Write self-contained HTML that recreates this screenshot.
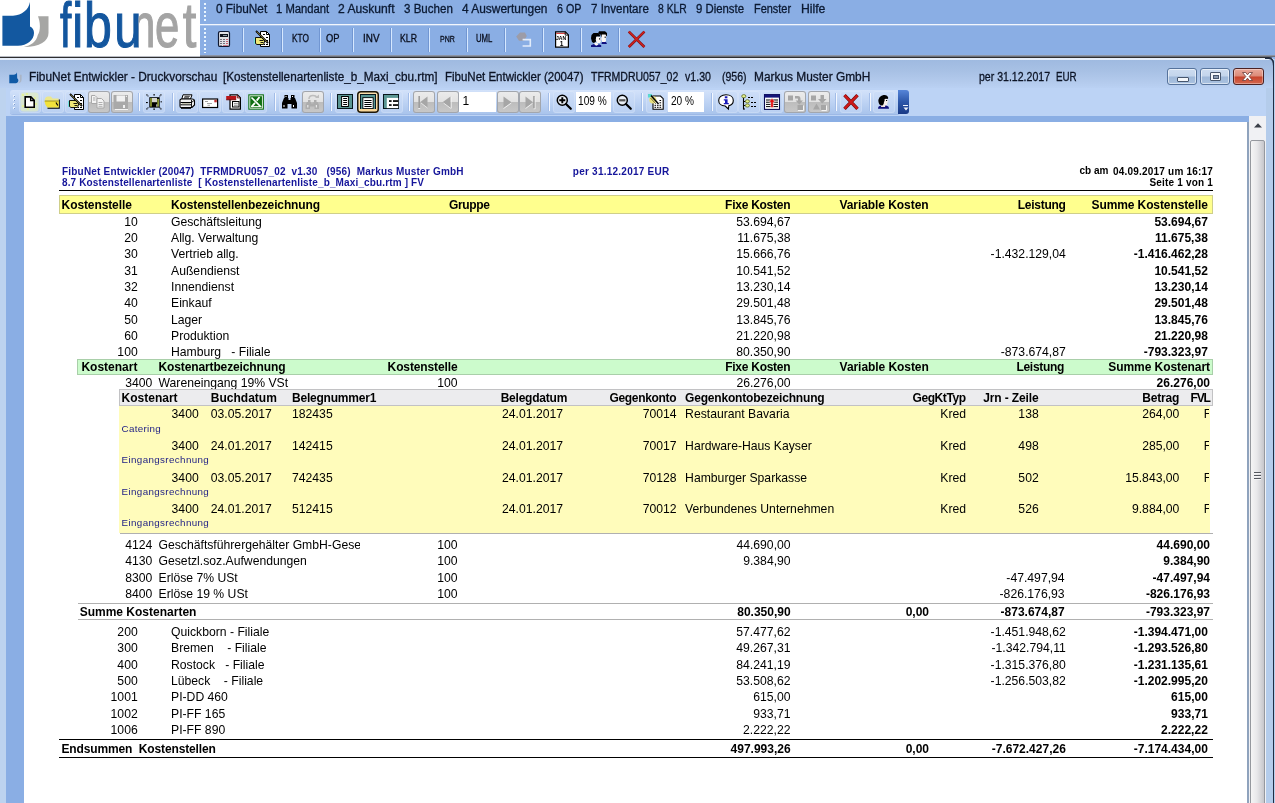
<!DOCTYPE html>
<html lang="de">
<head>
<meta charset="utf-8">
<title>FibuNet Entwickler - Druckvorschau</title>
<style>
html,body{margin:0;padding:0}
body{width:1275px;height:803px;overflow:hidden;position:relative;background:#8aaee4;font-family:"Liberation Sans",sans-serif;font-size:12.2px;color:#000}
.t{position:absolute;white-space:pre;line-height:16px;font-size:12.2px}
.b{font-weight:bold}
.ui{position:absolute;transform-origin:0 0;display:inline-block;-webkit-text-stroke:0.3px currentColor;white-space:pre;font-size:12px;line-height:16px;color:#0b1a33}
.abs{position:absolute}
#logo{position:absolute;left:0;top:0;width:200px;height:57px;background:#fff}
#menubar{position:absolute;left:200px;top:0;width:1075px;height:24px;background:#8aaee4}
#tb1{position:absolute;left:200px;top:26px;width:1075px;height:30px;background:#8aaee4}
.sep1{position:absolute;top:28px;width:1px;height:24px;background:#7196d2;border-right:1.3px solid #d6e8ff}
#win{position:absolute;left:0;top:59px;width:1275px;height:744px}
#page{position:absolute;left:24px;top:122px;width:1223px;height:681px;background:#fff}
.btn2{position:absolute;top:91px;width:22px;height:22px;border-radius:3px;background:linear-gradient(#cddef8,#bad0f2);box-shadow:inset 0 0 0 1px rgba(255,255,255,.18)}
.dis{background:linear-gradient(#ececec 0,#e2e2e2 48%,#bdbdbd 52%,#c8c8c8 100%);box-shadow:inset 0 0 0 1px #a2a6ad}
.sep2{position:absolute;top:93px;width:1px;height:18px;background:#a3bde8;border-right:1px solid #f4f8ff}
.wb{position:absolute;top:68px;width:30px;height:17px;box-sizing:border-box;border:1px solid #56739c;border-radius:3px;background:linear-gradient(#cddcf0 0,#c3d5ec 48%,#9fb8d9 52%,#aac2e0 100%);box-shadow:inset 0 0 0 1px rgba(255,255,255,.55)}
.wc{width:31px;border-color:#4b2223;background:linear-gradient(#e9a899 0,#dc8a78 48%,#c8432b 52%,#d3674f 100%);box-shadow:inset 0 0 0 1px rgba(255,255,255,.35)}
#txt{position:absolute;left:0;top:0;width:1275px;height:803px;will-change:transform}
</style>
</head>
<body>

<!-- top application bar -->
<div id="logo">
<svg width="200" height="57" viewBox="0 0 200 57" style="position:absolute;left:0;top:0;will-change:transform">
<path d="M2.4 15.7 L13 15.7 C22 15.2 28.5 10 30 2.1 L30 26.5 C32.5 27.5 34 30 34 33 C34 40 27 45.7 18 45.7 L2.4 45.7 Z" fill="#1358a0"/>
<path d="M38 16.2 L48.5 16.2 L48.5 33 C48.5 41 40 47 23.7 47 C31 45.5 36.5 41.5 37.8 35 C39.2 33 39.9 30 39.9 26 C39.9 22 39 19 38 16.2 Z" fill="#a6a6a4"/>
<defs><clipPath id="cn"><rect x="138.6" y="0" width="62" height="57"/></clipPath></defs><g font-family="Liberation Sans, sans-serif" font-size="60" transform="translate(0,46.6) scale(1,1.035) translate(0,-46.6)"><text y="46.6" fill="#13569e" stroke="#13569e" stroke-width="1.1"><tspan x="60.07" textLength="11.32" lengthAdjust="spacingAndGlyphs">f</tspan><tspan x="72.18" textLength="10.87" lengthAdjust="spacingAndGlyphs">i</tspan><tspan x="83.93" textLength="27.83" lengthAdjust="spacingAndGlyphs">b</tspan><tspan x="114.35" textLength="27.36" lengthAdjust="spacingAndGlyphs">u</tspan></text><text y="46.6" fill="#a4a4a4" stroke="#a4a4a4" stroke-width="1.1" clip-path="url(#cn)"><tspan x="131.40" textLength="23.83" lengthAdjust="spacingAndGlyphs">n</tspan><tspan x="154.99" textLength="24.30" lengthAdjust="spacingAndGlyphs">e</tspan><tspan x="182.81" textLength="13.60" lengthAdjust="spacingAndGlyphs">t</tspan></text></g>
</svg>
</div>
<div id="menubar"></div>
<div class="abs" style="left:200px;top:24px;width:1075px;height:1px;background:#f2f6fd"></div>
<div class="abs" style="left:200px;top:25px;width:1075px;height:1px;background:#a9c3ea"></div>
<div id="tb1"></div>
<div class="abs" style="left:204px;top:28px;width:2px;height:25px;background:repeating-linear-gradient(#eaf6ff 0,#eaf6ff 2px,transparent 2px,transparent 4px)"></div>
<div class="abs" style="left:204px;top:3px;width:2px;height:19px;background:repeating-linear-gradient(#eaf6ff 0,#eaf6ff 2px,transparent 2px,transparent 4px)"></div>
<div class="abs" style="left:0;top:56px;width:200px;height:1px;background:#b8bbc2"></div>
<div class="abs" style="left:200px;top:54.5px;width:1075px;height:2.5px;background:linear-gradient(#9ba6ba,#5c5e64)"></div>
<div class="abs" style="left:0;top:57px;width:1275px;height:1.4px;background:#2e2e30"></div>
<div class="abs" style="left:0;top:58.4px;width:1275px;height:1.6px;background:#e6eefa"></div>
<!-- child window -->
<div class="abs" style="left:0;top:60px;width:1275px;height:28px;background:linear-gradient(#9fbae0 0,#a8c1e5 40%,#b4cbed 80%,#bad1f3 100%)"></div>
<div class="abs" style="left:0;top:88px;width:1275px;height:28px;background:#bcd3f5"></div>
<div class="abs" style="left:0;top:116px;width:1275px;height:687px;background:#8aaee4"></div>
<div class="abs" style="left:0;top:88px;width:6px;height:715px;background:#bdd3ef"></div>
<div class="abs" style="left:1266px;top:88px;width:7px;height:715px;background:#b4cceb"></div>
<div class="abs" style="left:1273px;top:65px;width:1.4px;height:741px;background:#1f2d44"></div>
<svg class="abs" style="left:1265px;top:57px" width="10" height="10" viewBox="0 0 10 10"><path d="M0 1.2 H3.5 Q8.7 1.2 8.7 8.5" fill="none" stroke="#1f2d44" stroke-width="1.6"/><path d="M4 0 H10 V8 Q10 0 4 0 Z" fill="#8aaee4"/></svg>
<div class="abs" style="left:1274.4px;top:59px;width:1px;height:744px;background:#b9d0ee"></div>
<div id="page"></div>
<div class="abs" style="left:1247px;top:122px;width:2px;height:681px;background:#8fa3bd"></div>
<!-- scrollbar -->
<div class="abs" style="left:1249px;top:116px;width:17px;height:687px;background:#f0f1f4"></div>
<div class="abs" style="left:1250px;top:140px;width:15px;height:670px;border:1px solid #95989e;border-radius:2px;box-sizing:border-box;background:linear-gradient(90deg,#f5f5f5,#e8e8ea 45%,#c6c6cb)"></div>
<svg class="abs" style="left:1253px;top:121px" width="10" height="8" viewBox="0 0 10 8"><path d="M1 6.5 L5 2.2 L9 6.5 Z" fill="#3a3f48"/></svg>
<div class="abs" style="left:1254px;top:472px;width:7px;height:1px;background:#55585f;box-shadow:0 1px 0 #f4f4f6"></div>
<div class="abs" style="left:1254px;top:475px;width:7px;height:1px;background:#55585f;box-shadow:0 1px 0 #f4f4f6"></div>
<div class="abs" style="left:1254px;top:478px;width:7px;height:1px;background:#55585f;box-shadow:0 1px 0 #f4f4f6"></div>
<!-- window buttons -->
<div class="wb" style="left:1167px"><div style="position:absolute;left:9px;top:7.5px;width:10px;height:3px;background:#f4f7fb;border:1px solid #47566d;border-radius:1px;box-sizing:content-box"></div></div>
<div class="wb" style="left:1200px"><div style="position:absolute;left:9px;top:3px;width:9px;height:7px;background:#f4f7fb;border:1px solid #47566d;border-radius:1px"></div><div style="position:absolute;left:12px;top:6px;width:4px;height:1.5px;background:#8b9bb3;border:1px solid #47566d"></div></div>
<div class="wb wc" style="left:1233px"><svg width="31" height="17" viewBox="0 0 31 17" style="position:absolute;left:-2px;top:-1.5px"><path d="M10.5 4.5 L13.7 4.5 L15.5 6.8 L17.3 4.5 L20.5 4.5 L17.2 8.5 L20.5 12.5 L17.3 12.5 L15.5 10.2 L13.7 12.5 L10.5 12.5 L13.8 8.5 Z" fill="#fff" stroke="#6a3a36" stroke-width="0.8"/></svg></div>

<div id="txt">
<span class="ui" style="transform:scaleX(0.9842);left:215.90px;top:1.00px">0 FibuNet</span>
<span class="ui" style="transform:scaleX(0.9382);left:275.60px;top:1.00px">1 Mandant</span>
<span class="ui" style="transform:scaleX(1.0083);left:338.00px;top:1.00px">2 Auskunft</span>
<span class="ui" style="transform:scaleX(0.9625);left:403.50px;top:1.00px">3 Buchen</span>
<span class="ui" style="transform:scaleX(0.9935);left:461.70px;top:1.00px">4 Auswertungen</span>
<span class="ui" style="transform:scaleX(0.8923);left:556.70px;top:1.00px">6 OP</span>
<span class="ui" style="transform:scaleX(0.9628);left:591.00px;top:1.00px">7 Inventare</span>
<span class="ui" style="transform:scaleX(0.8636);left:657.60px;top:1.00px">8 KLR</span>
<span class="ui" style="transform:scaleX(0.9469);left:695.70px;top:1.00px">9 Dienste</span>
<span class="ui" style="transform:scaleX(0.9120);left:753.50px;top:1.00px">Fenster</span>
<span class="ui" style="transform:scaleX(1.0164);left:800.60px;top:1.00px">Hilfe</span>
<div class="sep1" style="left:241.8px"></div>
<div class="sep1" style="left:280.9px"></div>
<div class="sep1" style="left:318.7px"></div>
<div class="sep1" style="left:351.6px"></div>
<div class="sep1" style="left:389.7px"></div>
<div class="sep1" style="left:427.9px"></div>
<div class="sep1" style="left:466.3px"></div>
<div class="sep1" style="left:504.2px"></div>
<div class="sep1" style="left:542.3px"></div>
<div class="sep1" style="left:580.2px"></div>
<div class="sep1" style="left:618.0px"></div>
<svg class="abs" style="left:216.00px;top:31.00px;overflow:visible" width="16" height="16" viewBox="0 0 16 16"><rect x="2.5" y="0.5" width="11" height="15" rx="1.6" fill="#e2e2e6" stroke="#0e1730" stroke-width="1.2"/><rect x="4" y="3" width="8" height="3" fill="#10141c"/><rect x="7" y="4" width="4" height="1" fill="#8c98a4"/><g fill="#74747e"><rect x="4" y="8" width="2" height="1"/><rect x="7" y="8" width="2" height="1"/><rect x="4" y="10" width="2" height="1"/><rect x="7" y="10" width="2" height="1"/><rect x="4" y="12" width="2" height="1"/><rect x="7" y="12" width="2" height="1"/><rect x="4" y="14" width="2" height="0.8"/></g><g fill="#c86070"><rect x="10" y="8" width="2" height="1"/><rect x="10" y="10" width="2" height="1"/><rect x="10" y="12" width="2" height="1"/><rect x="7" y="14" width="5" height="0.8"/></g></svg>
<svg class="abs" style="left:254.00px;top:31.00px;overflow:visible" width="16" height="16" viewBox="0 0 16 16"><path d="M6.5 0.5 H12.5 L15.5 3.5 V15.5 H6.5 Z" fill="#fff" stroke="#000" stroke-width="1"/><path d="M12.5 0.5 V3.5 H15.5" stroke="#000" fill="none" stroke-width="1"/><g fill="#000"><rect x="9" y="3" width="2" height="1"/><rect x="12" y="6" width="2" height="1"/><rect x="12" y="9" width="2" height="1"/><rect x="10" y="13" width="1" height="1"/><rect x="12" y="13" width="2" height="1"/></g><rect x="0" y="7" width="1.6" height="6" fill="#6fe0de"/><path d="M1.5 6.5 H5 Q8 6 9.5 8 L10.5 9.5 V11 L9.5 13.5 H3 L1.5 12.5 Z" fill="#f0e878" stroke="#000" stroke-width="0.9"/><path d="M5.5 9.5 H9.5 M6.5 11.5 H9.5" stroke="#000" stroke-width="0.9"/><path d="M2 0 L14 12" stroke="#000" stroke-width="1.8"/><path d="M2.6 0.6 L13.2 11.2" stroke="#b8a848" stroke-width="0.6"/></svg>
<span class="ui" style="transform:scaleX(0.8294);left:291.50px;top:30.80px;font-size:10.00px;color:#0a0f1e">KTO</span>
<span class="ui" style="transform:scaleX(0.9344);left:325.60px;top:30.80px;font-size:10.00px;color:#0a0f1e">OP</span>
<span class="ui" style="transform:scaleX(0.9898);left:362.70px;top:30.80px;font-size:10.00px;color:#0a0f1e">INV</span>
<span class="ui" style="transform:scaleX(0.8739);left:400.30px;top:30.80px;font-size:10.00px;color:#0a0f1e">KLR</span>
<span class="ui" style="transform:scaleX(0.7788);left:439.70px;top:31.30px;font-size:9.00px;color:#0a0f1e">PNR</span>
<span class="ui" style="transform:scaleX(0.7768);left:476.40px;top:30.80px;font-size:10.00px;color:#0a0f1e">UML</span>
<svg class="abs" style="left:514.00px;top:31.00px;overflow:visible" width="16" height="16" viewBox="0 0 16 16"><path d="M2.2 5.5 L6 1.5 H11 L12.8 5 L10 9.7 H5 Z" fill="#9c9ca8"/><path d="M8.6 8.6 H16.3 V15 H8.6" stroke="#e2ecfa" stroke-width="1.6" fill="none"/></svg>
<svg class="abs" style="left:554.00px;top:31.00px;overflow:visible" width="16" height="17" viewBox="0 0 16 17"><path d="M1.6 0.9 H11.4 L14.4 3.9 V16.2 H1.6 Z" fill="#fff" stroke="#000" stroke-width="1.2"/><rect x="2.2" y="1.9" width="9.5" height="1.1" fill="#d84848"/><path d="M11.2 0.9 V4.1 H14.4" fill="none" stroke="#000" stroke-width="0.9"/></svg>
<span class="ui" style="transform:scaleX(0.8791);left:556.30px;top:30.40px;font-size:5.80px;color:#000;font-weight:bold;-webkit-text-stroke:0">JAN</span>
<span class="ui" style="left:559.70px;top:35.60px;font-size:6.60px;color:#000;font-weight:bold;-webkit-text-stroke:0">1</span>
<svg class="abs" style="left:591.00px;top:31.00px;overflow:visible" width="16" height="16" viewBox="0 0 16 16"><path d="M8 0.3 H14 L16 2 V5.5 L15 4.5 H11.5 L10.3 6.5 L9.5 3.5 L7 2.5 Z" fill="#000"/><path d="M10.8 3.6 H14.6 L15.4 6 L14.7 8 L15.1 9.5 L14.2 11 H11 L10.3 8 Z" fill="#fbf7f4"/><rect x="13.6" y="5.6" width="1.2" height="1.2" fill="#000"/><path d="M11 11 H15 L16 13 H10.5 Z" fill="#101080"/><path d="M2.5 2 H7.2 L9.2 4 L8.6 5.8 L5.8 5.6 L4.8 8 L5.2 10.2 L3.2 12.2 L1 11 L0 7.2 L0.5 4 Z" fill="#000"/><path d="M5.2 5.7 H8.6 L10.1 8 L9.4 9.1 L9.9 10.6 L9 12.1 H6 L4.8 9 Z" fill="#fbf7f4"/><rect x="8" y="7.3" width="1.2" height="1.2" fill="#000"/><path d="M3.5 11.6 L6.5 12 L7.2 14.2 H3 Z" fill="#fbf7f4"/><path d="M0 14.2 L3 13 L5.2 15 L8 13.2 L10.2 14.2 V16 H0 Z" fill="#101080"/></svg>
<svg class="abs" style="left:628.00px;top:31.00px;overflow:visible" width="17" height="17" viewBox="0 0 17 17"><path d="M0.8 0.6 L16.4 16 M16.4 0.6 L0.8 16" stroke="#7c1212" stroke-width="2.7"/><path d="M0.8 0.6 L16.4 16 M16.4 0.6 L0.8 16" stroke="#d42020" stroke-width="1.4"/></svg>
<svg class="abs" style="left:9px;top:71.5px" width="14" height="12" viewBox="0 0 14 12"><path d="M0.3 2.8 L4.5 2.8 C6.5 2.6 7.6 1.8 8 0.3 L8.2 6.3 C9 6.8 9.4 7.6 9.4 8.4 C9.4 10.4 7.5 11.3 5.5 11.3 L0.3 11.3 Z" fill="#0f5aa6"/><path d="M10.6 2.8 L12.6 2.8 L12.6 7.8 C12.6 10 10.5 11.4 8.5 11.4 C10.2 10.6 11 9.4 11 7.8 Z" fill="#a9b2be" opacity="0.85"/></svg>
<span class="ui" style="transform:scaleX(0.9873);left:28.60px;top:68.60px;color:#0c1426">FibuNet Entwickler - Druckvorschau</span>
<span class="ui" style="transform:scaleX(0.9771);left:223.40px;top:68.60px;color:#0c1426">[Kostenstellenartenliste_b_Maxi_cbu.rtm]</span>
<span class="ui" style="transform:scaleX(0.9570);left:444.80px;top:68.60px;color:#0c1426">FibuNet Entwickler (20047)</span>
<span class="ui" style="transform:scaleX(0.8786);left:590.90px;top:68.60px;color:#0c1426">TFRMDRU057_02</span>
<span class="ui" style="transform:scaleX(0.8824);left:685.20px;top:68.60px;color:#0c1426">v1.30</span>
<span class="ui" style="transform:scaleX(0.8782);left:721.70px;top:68.60px;color:#0c1426">(956)</span>
<span class="ui" style="transform:scaleX(0.9911);left:753.60px;top:68.60px;color:#0c1426">Markus Muster GmbH</span>
<span class="ui" style="transform:scaleX(0.8795);left:978.50px;top:68.60px;color:#0c1426">per 31.12.2017</span>
<span class="ui" style="transform:scaleX(0.8170);left:1055.50px;top:68.60px;color:#0c1426">EUR</span>
<div class="abs" style="left:10px;top:90px;width:890px;height:24px;border-radius:3px;background:linear-gradient(#d3e2fa 0,#c2d6f5 40%,#a9c4ec 100%);box-shadow:0 1px 0 #9db9e6"></div>
<div class="abs" style="left:898px;top:90px;width:11px;height:24px;border-radius:0 3px 3px 0;background:linear-gradient(#5685d8 0,#2c56a8 50%,#1a3a86 100%)"></div>
<div class="abs" style="left:903px;top:105px;width:5px;height:1.4px;background:#f0f4fb"></div>
<svg class="abs" style="left:902px;top:107px" width="7" height="5" viewBox="0 0 7 5"><path d="M1.5 0.5 H6.5 L4 3.6 Z" fill="#f0f4fb"/></svg>
<div class="abs" style="left:13px;top:95px;width:2px;height:15px;background:repeating-linear-gradient(#e8f2ff 0,#e8f2ff 2px,transparent 2px,transparent 4px)"></div>
<div class="abs" style="left:14px;top:96px;width:1px;height:15px;background:repeating-linear-gradient(#7d9cd0 0,#7d9cd0 1px,transparent 1px,transparent 4px)"></div>
<div class="btn2" style="left:18.8px"></div>
<svg class="abs" style="left:22.00px;top:94.00px;overflow:visible" width="16" height="16" viewBox="0 0 16 16"><rect x="-1.5" y="-1.5" width="18" height="19" rx="3" fill="#e9f2b0" opacity="0.55"/><g fill="#e2ef9c"><rect x="0" y="0" width="2" height="2"/><rect x="4" y="-1" width="2" height="2"/><rect x="12" y="3" width="2" height="2"/><rect x="13" y="9" width="2" height="2"/><rect x="0" y="11" width="2" height="2"/><rect x="5" y="14" width="2" height="2"/><rect x="11" y="13" width="2" height="2"/></g><path d="M3.2 2.9 H8.8 L12.2 6.3 V13.3 H3.2 Z" fill="#fff" stroke="#000" stroke-width="1.6" stroke-linejoin="miter"/><path d="M8.6 2.9 V6.5 H12.2" fill="none" stroke="#000" stroke-width="1.3"/></svg>
<div class="btn2" style="left:41.8px"></div>
<svg class="abs" style="left:44.00px;top:94.00px;overflow:visible" width="16" height="16" viewBox="0 0 16 16"><path d="M3.5 14.8 H15.8 V5.5 H14.5 V13.5 H3.5 Z" fill="#000"/><path d="M0.8 7 V5 Q1.5 3 3.5 2.6 H7 L8.5 4.5 H14.6 V7 Z" fill="#ece78c"/><path d="M0.4 7 H14.8 V13.6 H3.4 Q1 11 0.4 7 Z" fill="#f2e23c"/><path d="M0.8 7 H14.5" stroke="#8a7f10" stroke-width="0.8"/><path d="M12 8.5 L13.8 11.5" stroke="#000" stroke-width="1.2"/></svg>
<div class="btn2" style="left:64.8px"></div>
<svg class="abs" style="left:68.00px;top:94.00px;overflow:visible" width="16" height="16" viewBox="0 0 16 16"><path d="M6.5 0.5 H12.5 L15.5 3.5 V15.5 H6.5 Z" fill="#fff" stroke="#000" stroke-width="1"/><path d="M12.5 0.5 V3.5 H15.5" stroke="#000" fill="none" stroke-width="1"/><g fill="#000"><rect x="9" y="3" width="2" height="1"/><rect x="12" y="6" width="2" height="1"/><rect x="12" y="9" width="2" height="1"/><rect x="10" y="13" width="1" height="1"/><rect x="12" y="13" width="2" height="1"/></g><rect x="0" y="7" width="1.6" height="6" fill="#6fe0de"/><path d="M1.5 6.5 H5 Q8 6 9.5 8 L10.5 9.5 V11 L9.5 13.5 H3 L1.5 12.5 Z" fill="#f0e878" stroke="#000" stroke-width="0.9"/><path d="M5.5 9.5 H9.5 M6.5 11.5 H9.5" stroke="#000" stroke-width="0.9"/><path d="M2 0 L14 12" stroke="#000" stroke-width="1.8"/><path d="M2.6 0.6 L13.2 11.2" stroke="#b8a848" stroke-width="0.6"/></svg>
<div class="btn2 dis" style="left:87.8px"></div>
<svg class="abs" style="left:90.00px;top:94.00px;overflow:visible" width="16" height="16" viewBox="0 0 16 16"><path d="M1.5 1.5 H5 L7 3.5 V9.5 H1.5 Z" fill="#f4f4f4" stroke="#a8a8a8" stroke-width="1"/><path d="M3 4 H5.5 M3 6 H5.5" stroke="#a8a8a8" stroke-width="1"/><path d="M7 4.5 H11.5 L14 7 V14 H7 Z" fill="#f4f4f4" stroke="#a8a8a8" stroke-width="1"/><path d="M8.5 8.5 H12.5 M8.5 10.5 H12.5 M8.5 12.3 H12.5" stroke="#a8a8a8" stroke-width="0.9"/></svg>
<div class="btn2 dis" style="left:110.7px"></div>
<svg class="abs" style="left:113.00px;top:94.00px;overflow:visible" width="16" height="16" viewBox="0 0 16 16"><rect x="0.5" y="1" width="14.5" height="14" fill="#a9a9a9"/><rect x="3.5" y="1.5" width="8.5" height="6" fill="#f1f1f1"/><rect x="10" y="11" width="2" height="3" fill="#f1f1f1"/><rect x="2" y="15" width="13" height="1" fill="#f4f4f4"/><rect x="12.8" y="1.8" width="1.2" height="1.2" fill="#eee"/></svg>
<div class="btn2" style="left:143.2px"></div>
<svg class="abs" style="left:146.00px;top:94.00px;overflow:visible" width="16" height="16" viewBox="0 0 16 16"><g fill="#000"><rect x="0.3" y="0.3" width="1.2" height="1.2"/><rect x="1.5" y="1.5" width="1" height="1"/><rect x="14.3" y="0.3" width="1.2" height="1.2"/><rect x="13.3" y="1.5" width="1" height="1"/><rect x="7.5" y="0" width="1.2" height="1.6"/><rect x="7.5" y="14.4" width="1.2" height="1.6"/><rect x="0" y="8" width="1.8" height="1.1"/><rect x="14.6" y="7.2" width="1.2" height="1.2"/><rect x="0.3" y="14.3" width="1.2" height="1.2"/><rect x="1.5" y="13.3" width="1" height="1"/><rect x="14.3" y="14.3" width="1.2" height="1.2"/><rect x="13.3" y="13.3" width="1" height="1"/></g><rect x="3.3" y="3.2" width="10.4" height="10.4" fill="#000"/><rect x="4.2" y="4" width="1.6" height="8.6" fill="#9aa836"/><rect x="11.3" y="5" width="1.6" height="7.6" fill="#9aa836"/><rect x="6" y="4" width="5" height="4.2" fill="#d4d4cc"/><rect x="10.2" y="10.3" width="1.2" height="2.4" fill="#c8c8c8"/></svg>
<div class="btn2" style="left:176.4px"></div>
<svg class="abs" style="left:179.00px;top:94.00px;overflow:visible" width="16" height="16" viewBox="0 0 16 16"><path d="M4 0.8 H13 L11.5 5 H2.8 Z" fill="#fff" stroke="#000" stroke-width="1"/><path d="M5.5 2.3 H10.8 M5 3.8 H10" stroke="#000" stroke-width="0.8"/><path d="M1 6 Q1 5 2.5 5 H13 Q15.5 5 15.5 7 V11 L13 13.5 H2 Q1 13.5 1 12 Z" fill="#f2f2f2" stroke="#000" stroke-width="1.1"/><path d="M1.5 8.5 H12.5 M1.5 10.8 H12.5" stroke="#000" stroke-width="1"/><path d="M12.5 6 V13 M12.5 8.5 L15 6.5" stroke="#000" stroke-width="0.9"/><rect x="3" y="9.2" width="8" height="1" fill="#b9b9a0"/><path d="M2 14.3 H12" stroke="#000" stroke-width="1"/></svg>
<div class="btn2" style="left:199.4px"></div>
<svg class="abs" style="left:202.00px;top:94.00px;overflow:visible" width="16" height="16" viewBox="0 0 16 16"><rect x="0.6" y="5" width="15" height="8.5" fill="#fff" stroke="#000" stroke-width="1.2"/><rect x="12.3" y="5.8" width="2.5" height="2.5" fill="#c03030"/><path d="M3 7.5 H6 M5 9.5 H10 M5.5 11.3 H8" stroke="#9a9a9a" stroke-width="0.9"/></svg>
<div class="btn2" style="left:222.4px"></div>
<svg class="abs" style="left:225.00px;top:94.00px;overflow:visible" width="16" height="16" viewBox="0 0 16 16"><path d="M5 0.8 H12.5 L15.4 3.7 V15.2 H5 Z" fill="#fff" stroke="#000" stroke-width="1.2"/><path d="M12.3 0.8 V3.9 H15.4" fill="none" stroke="#7a1010" stroke-width="1"/><rect x="1.2" y="2" width="10" height="3.8" fill="#b81418"/><path d="M1.2 5.8 H11.2" stroke="#600" stroke-width="0.8"/><rect x="7.5" y="7.5" width="6.5" height="5.5" fill="#f4f4f4" stroke="#000" stroke-width="1"/><path d="M9 9.6 H12.8 M9 11.3 H12.8" stroke="#8a8a8a" stroke-width="0.9"/></svg>
<div class="btn2" style="left:245.4px"></div>
<svg class="abs" style="left:248.00px;top:94.00px;overflow:visible" width="16" height="16" viewBox="0 0 16 16"><rect x="0.3" y="0.3" width="15.6" height="15.4" fill="#0f6e12"/><rect x="1.8" y="1.8" width="12.6" height="12.4" fill="none" stroke="#e8f4e8" stroke-width="0.9"/><path d="M3.5 3.5 L12.5 12.5" stroke="#fff" stroke-width="1.6"/><path d="M11.5 3 L8.7 6.6 M7 8.8 L3.5 12.8" stroke="#fff" stroke-width="1.8"/><path d="M3 12.6 H13.5" stroke="#fff" stroke-width="1"/></svg>
<div class="btn2" style="left:278.8px"></div>
<svg class="abs" style="left:282.00px;top:94.00px;overflow:visible" width="16" height="16" viewBox="0 0 16 16"><g fill="#000"><rect x="2.5" y="1" width="3.5" height="3"/><rect x="9" y="1" width="3.5" height="3"/><path d="M2 4 H6.5 V6 H8.5 V4 H13 L15 9 V14.5 H9.5 V10 H5.5 V14.5 H0 V9 Z"/></g><g fill="#fff"><rect x="3.5" y="2" width="1" height="1"/><rect x="10" y="2" width="1" height="1"/><rect x="1.5" y="11" width="1" height="2"/><rect x="11" y="11" width="1" height="2"/></g></svg>
<div class="btn2 dis" style="left:302.0px"></div>
<svg class="abs" style="left:305.00px;top:94.00px;overflow:visible" width="16" height="16" viewBox="0 0 16 16"><g fill="#adadad"><path d="M2 8 H6 V9.5 H8.5 V8 H12.5 L14 11 V15 H9.5 V12.5 H5 V15 H0.5 V11 Z"/><rect x="3" y="6" width="2.5" height="2"/><rect x="9" y="6" width="2.5" height="2"/></g><path d="M4 5 Q4 1.5 8 1.5 Q11 1.5 12 3.5" fill="none" stroke="#bdbdbd" stroke-width="1.5"/><path d="M10 4 H14 V0.5 Z" fill="#bdbdbd"/><g fill="#e8e8e8"><rect x="2.2" y="11" width="1.2" height="2.5"/><rect x="10.8" y="11" width="1.2" height="2.5"/></g></svg>
<div class="btn2" style="left:335.2px"></div>
<svg class="abs" style="left:337.00px;top:94.00px;overflow:visible" width="16" height="16" viewBox="0 0 16 16"><rect x="0" y="0" width="16" height="15" fill="#08161c"/><rect x="1" y="1" width="14" height="13" fill="#5a9693"/><rect x="4.6" y="2.5" width="6.8" height="10" fill="#fff" stroke="#000" stroke-width="1"/><path d="M6.2 4.5 H10 M6.2 6.5 H10 M6.2 8.5 H10 M6.2 10.5 H10" stroke="#000" stroke-width="1"/></svg>
<div class="btn2" style="left:357.4px;background:linear-gradient(#fde0ae,#f9d596);box-shadow:inset 0 0 0 1.5px #1c160a;border-radius:4px"></div>
<svg class="abs" style="left:360.00px;top:94.00px;overflow:visible" width="16" height="16" viewBox="0 0 16 16"><rect x="0" y="0" width="16" height="15" fill="#08161c"/><rect x="1" y="1" width="14" height="14" fill="#5a9693"/><rect x="2.4" y="3.2" width="11.2" height="11.8" fill="#0a0a0a"/><rect x="3.3" y="4.1" width="9.4" height="10" fill="#fff"/><path d="M4.4 6.5 H11.6 M4.4 8.5 H11.6 M4.4 10.5 H11.6 M4.4 12.5 H11.6" stroke="#000" stroke-width="1"/></svg>
<div class="btn2" style="left:381.2px"></div>
<svg class="abs" style="left:383.00px;top:94.00px;overflow:visible" width="16" height="16" viewBox="0 0 16 16"><rect x="0" y="0" width="16" height="15" fill="#08161c"/><rect x="1" y="1" width="14" height="13" fill="#5a9693"/><rect x="3.8" y="3.9" width="11.4" height="10.2" fill="#fff"/><g fill="#000"><rect x="6" y="6.2" width="2.6" height="1.7"/><rect x="10" y="6.2" width="5.2" height="1.7"/><rect x="6" y="10.2" width="2.6" height="1.7"/><rect x="10" y="10.2" width="5.2" height="1.7"/></g></svg>
<div class="btn2 dis" style="left:413.3px"></div>
<svg class="abs" style="left:416.00px;top:94.00px;overflow:visible" width="16" height="16" viewBox="0 0 16 16"><path d="M3.2 2 V14.5" stroke="#9d9d9d" stroke-width="1.6"/><path d="M4 8.2 L11.5 2.5 V14 Z" fill="#a6a6a6"/><path d="M4.8 8.8 L11.5 14" stroke="#f4f4f4" stroke-width="0.8"/><path d="M2.3 14.5 H4.2" stroke="#f0f0f0" stroke-width="1"/></svg>
<div class="btn2 dis" style="left:436.6px"></div>
<svg class="abs" style="left:439.00px;top:94.00px;overflow:visible" width="16" height="16" viewBox="0 0 16 16"><path d="M3.5 8.2 L11.5 2.5 V14 Z" fill="#a6a6a6"/><path d="M4.5 9 L11.5 14.2 L12.3 14.2 V3" stroke="#f4f4f4" stroke-width="0.8" fill="none"/></svg>
<div class="btn2 dis" style="left:496.6px"></div>
<svg class="abs" style="left:499.00px;top:94.00px;overflow:visible" width="16" height="16" viewBox="0 0 16 16"><path d="M12.5 8.2 L4.5 2.5 V14 Z" fill="#a6a6a6"/><path d="M4.5 14.6 L12.3 9" stroke="#f4f4f4" stroke-width="0.9"/></svg>
<div class="btn2 dis" style="left:519.4px"></div>
<svg class="abs" style="left:522.00px;top:94.00px;overflow:visible" width="16" height="16" viewBox="0 0 16 16"><path d="M11 8.2 L3.5 2.5 V14 Z" fill="#a6a6a6"/><path d="M3.5 14.6 L10.5 9.3" stroke="#f4f4f4" stroke-width="0.9"/><path d="M12 2 V14.5" stroke="#9d9d9d" stroke-width="1.6"/><path d="M13.2 2.5 V14.8 H11.5" stroke="#f0f0f0" stroke-width="0.8" fill="none"/></svg>
<div class="btn2" style="left:552.8px"></div>
<svg class="abs" style="left:556.00px;top:94.00px;overflow:visible" width="16" height="16" viewBox="0 0 16 16"><circle cx="6.3" cy="6.3" r="5" fill="#e9eef4" stroke="#000" stroke-width="1.5"/><path d="M3.3 6.3 H9.3 M6.3 3.3 V9.3" stroke="#000" stroke-width="1.9"/><path d="M10 10 L14.8 14.8" stroke="#000" stroke-width="2.2" stroke-linecap="round"/></svg>
<div class="btn2" style="left:612.8px"></div>
<svg class="abs" style="left:616.00px;top:94.00px;overflow:visible" width="16" height="16" viewBox="0 0 16 16"><circle cx="6.3" cy="6.3" r="5" fill="#e9eef4" stroke="#000" stroke-width="1.5"/><path d="M3.2 6.3 H9.4" stroke="#555" stroke-width="2.2"/><path d="M10 10 L14.8 14.8" stroke="#000" stroke-width="2.2" stroke-linecap="round"/></svg>
<div class="btn2" style="left:645.5px"></div>
<svg class="abs" style="left:648.00px;top:94.00px;overflow:visible" width="16" height="16" viewBox="0 0 16 16"><path d="M5 2 H12.5 L15.2 4.7 V15.2 H5 Z" fill="#fff" stroke="#000" stroke-width="1.1"/><rect x="0" y="0" width="4" height="3.5" fill="#58d8d0"/><circle cx="4.8" cy="5.8" r="3.6" fill="#e8e080"/><path d="M3 1.5 L10.5 10" stroke="#000" stroke-width="1.5"/><path d="M2.5 4 L8 10" stroke="#6a5a20" stroke-width="0.8"/><g fill="#000"><rect x="6.5" y="10.8" width="1.6" height="1"/><rect x="9" y="10.8" width="1.6" height="1"/><rect x="11.5" y="10.8" width="1.6" height="1"/><rect x="6.5" y="12.8" width="1.6" height="1"/><rect x="9" y="12.8" width="1.6" height="1"/><rect x="11.5" y="12.8" width="1.6" height="1"/><rect x="11.5" y="6" width="1.6" height="1"/><rect x="11.5" y="8.3" width="1.6" height="1"/></g></svg>
<div class="btn2" style="left:715.5px"></div>
<svg class="abs" style="left:718.00px;top:94.00px;overflow:visible" width="16" height="16" viewBox="0 0 16 16"><path d="M8 0.8 C12.5 0.8 15.3 3.3 15.3 6.4 C15.3 9 13.4 11 10.8 11.7 L10.4 15 L7.2 12 C3.2 11.8 0.7 9.4 0.7 6.4 C0.7 3.3 3.5 0.8 8 0.8 Z" fill="#fff" stroke="#000" stroke-width="1.1"/><g fill="#1818b8"><rect x="6.8" y="2.3" width="2.6" height="2"/><path d="M5.8 5.3 H9.6 V9 H10.8 V10.2 H5.8 V9 H7 V6.5 H5.8 Z"/></g></svg>
<div class="btn2" style="left:738.3px"></div>
<svg class="abs" style="left:741.00px;top:94.00px;overflow:visible" width="16" height="16" viewBox="0 0 16 16"><path d="M2.5 3.5 V15.5" stroke="#000" stroke-width="1.1"/><path d="M2.5 7.5 H5 M2.5 11.5 H5 M2.5 15 H4" stroke="#000" stroke-width="1"/><g fill="#e6f08e" stroke="#4c5c10" stroke-width="0.7"><ellipse cx="2.8" cy="2.2" rx="2.1" ry="1.6"/><ellipse cx="6.4" cy="7.3" rx="2.1" ry="1.6"/><ellipse cx="6.4" cy="11.5" rx="2.1" ry="1.6"/></g><g fill="#000"><rect x="7" y="3" width="2" height="1"/><rect x="10" y="3" width="2" height="1"/><rect x="10" y="8" width="2" height="1"/><rect x="13" y="8" width="2" height="1"/><rect x="10" y="12" width="2" height="1"/><rect x="13" y="12" width="2" height="1"/></g></svg>
<div class="btn2" style="left:761.2px"></div>
<svg class="abs" style="left:764.00px;top:94.00px;overflow:visible" width="16" height="16" viewBox="0 0 16 16"><rect x="0.5" y="0.6" width="15" height="14.8" fill="#fff" stroke="#0a0a50" stroke-width="1.1"/><rect x="0.5" y="0.6" width="15" height="3" fill="#14147a"/><path d="M2 6 H14 M2 8.2 H14 M2 10.4 H14 M2 12.6 H14" stroke="#000" stroke-width="1"/><path d="M8 4.3 L11.2 8 H9.3 V13.6 H6.7 V8 H4.8 Z" fill="#e01010" stroke="#fff" stroke-width="0.5"/></svg>
<div class="btn2 dis" style="left:784.4px"></div>
<svg class="abs" style="left:787.00px;top:94.00px;overflow:visible" width="16" height="16" viewBox="0 0 16 16"><g fill="#a6a6a6"><rect x="1" y="1.5" width="5" height="5"/><path d="M8 2 H11 Q13.5 2 13.5 5 V6.5 H16 L12.3 10.5 L8.6 6.5 H11 V5 Q11 4.5 10.5 4.5 H8 Z"/><rect x="10.5" y="11" width="5.5" height="5"/></g><path d="M16.5 11.5 V16.5 H11" stroke="#f3f3f3" stroke-width="1" fill="none"/></svg>
<div class="btn2 dis" style="left:807.5px"></div>
<svg class="abs" style="left:810.00px;top:94.00px;overflow:visible" width="16" height="16" viewBox="0 0 16 16"><g fill="#a6a6a6"><rect x="1" y="1.5" width="5" height="5"/><path d="M10.5 1 H14 V5 H16.5 L12.2 9.5 L8 5 H10.5 Z"/><path d="M6.5 9.5 L10 15.5 H3 Z"/><rect x="11" y="11" width="5" height="5"/></g><path d="M16.5 11.5 V16.5 H11.5" stroke="#f3f3f3" stroke-width="1" fill="none"/></svg>
<div class="btn2" style="left:840.3px"></div>
<svg class="abs" style="left:843.00px;top:94.00px;overflow:visible" width="16" height="16" viewBox="0 0 16 16"><path d="M1.5 1.2 L14.5 14.8 M14.5 1.2 L1.5 14.8" stroke="#6e0c0c" stroke-width="3.4"/><path d="M1.5 1.2 L14.5 14.8 M14.5 1.2 L1.5 14.8" stroke="#d01818" stroke-width="2.2"/></svg>
<div class="btn2" style="left:873.3px"></div>
<svg class="abs" style="left:876.00px;top:94.00px;overflow:visible" width="16" height="16" viewBox="0 0 16 16"><path d="M2 14.8 Q2 12 5 11.5 H10 Q13 12 13 14.8 Z" fill="#10107a"/><path d="M5.5 9 L5 13 H9 L9.5 10 Z" fill="#f4e8e0"/><path d="M8 3.5 Q11.5 3.5 11.5 6.5 L12.3 8 L11.3 8.5 L11 11 Q9 11.5 8 10.5 L7 7 Z" fill="#f7efe9"/><path d="M7.5 1 Q11.5 0.5 12.3 4 L11.5 5 Q9.5 4.2 8.5 5.2 Q9 7 8 8 Q8 10 6.5 11.5 Q3 11.5 2.5 8 Q1.8 2.5 7.5 1 Z" fill="#000"/><rect x="10" y="6" width="1.1" height="1" fill="#000"/></svg>
<div class="sep2" style="left:138.3px"></div>
<div class="sep2" style="left:171.6px"></div>
<div class="sep2" style="left:273.5px"></div>
<div class="sep2" style="left:329.6px"></div>
<div class="sep2" style="left:408.3px"></div>
<div class="sep2" style="left:547.6px"></div>
<div class="sep2" style="left:640.6px"></div>
<div class="sep2" style="left:710.6px"></div>
<div class="sep2" style="left:835.3px"></div>
<div class="sep2" style="left:868.8px"></div>
<div class="abs" style="left:459.3px;top:91.5px;width:36.4px;height:20.5px;background:#fff"></div>
<div class="abs" style="left:575.7px;top:91.5px;width:35.5px;height:20.5px;background:#fff"></div>
<div class="abs" style="left:668.2px;top:91.5px;width:36.3px;height:20.5px;background:#fff"></div>
<span class="ui" style="left:462.60px;top:92.80px;color:#000;-webkit-text-stroke:0">1</span>
<span class="ui" style="transform:scaleX(0.8435);left:578.40px;top:92.80px;color:#000;-webkit-text-stroke:0">109 %</span>
<span class="ui" style="transform:scaleX(0.8409);left:671.30px;top:92.80px;color:#000;-webkit-text-stroke:0">20 %</span>
<span class="t b" style="letter-spacing:0.196px;left:62.00px;top:164.20px;font-size:10.00px;color:#15159a">FibuNet Entwickler (20047) &nbsp;TFRMDRU057_02 &nbsp;v1.30 &nbsp; (956) &nbsp;Markus Muster GmbH</span>
<span class="t b" style="letter-spacing:0.243px;left:572.80px;top:164.20px;font-size:10.00px;color:#15159a">per 31.12.2017 EUR</span>
<span class="t b" style="letter-spacing:0.140px;left:62.00px;top:175.20px;font-size:10.00px;color:#15159a">8.7 Kostenstellenartenliste &nbsp;[ Kostenstellenartenliste_b_Maxi_cbu.rtm ] FV</span>
<span class="t b" style="letter-spacing:0.025px;right:166.47px;top:163.10px;font-size:10.00px;color:#000">cb am</span>
<span class="t b" style="letter-spacing:0.196px;right:62.00px;top:164.20px;font-size:10.00px;color:#000">04.09.2017 um 16:17</span>
<span class="t b" style="letter-spacing:0.181px;right:62.02px;top:175.20px;font-size:10.00px;color:#000">Seite 1 von 1</span>
<div class="" style="position:absolute;left:59.00px;top:189.60px;width:1154.00px;height:1.40px;background:#000"></div>
<div class="" style="position:absolute;left:59.00px;top:195.00px;width:1154.30px;height:18.60px;background:#ffff8e;border:1px solid #cfcf8a;box-sizing:border-box"></div>
<span class="t b" style="letter-spacing:-0.104px;left:61.60px;top:197.00px;font-size:12.00px">Kostenstelle</span>
<span class="t b" style="letter-spacing:-0.131px;left:171.00px;top:197.00px;font-size:12.00px">Kostenstellenbezeichnung</span>
<span class="t b" style="letter-spacing:-0.333px;left:448.90px;top:197.00px;font-size:12.00px">Gruppe</span>
<span class="t b" style="letter-spacing:-0.261px;right:484.76px;top:197.00px;font-size:12.00px">Fixe Kosten</span>
<span class="t b" style="letter-spacing:-0.059px;right:346.46px;top:197.00px;font-size:12.00px">Variable Kosten</span>
<span class="t b" style="letter-spacing:-0.285px;right:209.48px;top:197.00px;font-size:12.00px">Leistung</span>
<span class="t b" style="letter-spacing:-0.102px;right:67.30px;top:197.00px;font-size:12.00px">Summe Kostenstelle</span>
<span class="t" style="right:1137.30px;top:214.00px">10</span>
<span class="t" style="left:171.00px;top:214.00px">Geschäftsleitung</span>
<span class="t" style="right:484.50px;top:214.00px">53.694,67</span>
<span class="t b" style="right:67.20px;top:214.00px;font-size:12.00px">53.694,67</span>
<span class="t" style="right:1137.30px;top:230.00px">20</span>
<span class="t" style="left:171.00px;top:230.00px">Allg. Verwaltung</span>
<span class="t" style="right:484.50px;top:230.00px">11.675,38</span>
<span class="t b" style="right:67.20px;top:230.00px;font-size:12.00px">11.675,38</span>
<span class="t" style="right:1137.30px;top:246.00px">30</span>
<span class="t" style="left:171.00px;top:246.00px">Vertrieb allg.</span>
<span class="t" style="right:484.50px;top:246.00px">15.666,76</span>
<span class="t" style="right:209.20px;top:246.00px">-1.432.129,04</span>
<span class="t b" style="right:67.20px;top:246.00px;font-size:12.00px">-1.416.462,28</span>
<span class="t" style="right:1137.30px;top:263.00px">31</span>
<span class="t" style="left:171.00px;top:263.00px">Außendienst</span>
<span class="t" style="right:484.50px;top:263.00px">10.541,52</span>
<span class="t b" style="right:67.20px;top:263.00px;font-size:12.00px">10.541,52</span>
<span class="t" style="right:1137.30px;top:279.00px">32</span>
<span class="t" style="left:171.00px;top:279.00px">Innendienst</span>
<span class="t" style="right:484.50px;top:279.00px">13.230,14</span>
<span class="t b" style="right:67.20px;top:279.00px;font-size:12.00px">13.230,14</span>
<span class="t" style="right:1137.30px;top:295.00px">40</span>
<span class="t" style="left:171.00px;top:295.00px">Einkauf</span>
<span class="t" style="right:484.50px;top:295.00px">29.501,48</span>
<span class="t b" style="right:67.20px;top:295.00px;font-size:12.00px">29.501,48</span>
<span class="t" style="right:1137.30px;top:312.00px">50</span>
<span class="t" style="left:171.00px;top:312.00px">Lager</span>
<span class="t" style="right:484.50px;top:312.00px">13.845,76</span>
<span class="t b" style="right:67.20px;top:312.00px;font-size:12.00px">13.845,76</span>
<span class="t" style="right:1137.30px;top:328.00px">60</span>
<span class="t" style="left:171.00px;top:328.00px">Produktion</span>
<span class="t" style="right:484.50px;top:328.00px">21.220,98</span>
<span class="t b" style="right:67.20px;top:328.00px;font-size:12.00px">21.220,98</span>
<span class="t" style="right:1137.30px;top:344.00px">100</span>
<span class="t" style="left:171.00px;top:344.00px">Hamburg &nbsp; - Filiale</span>
<span class="t" style="right:484.50px;top:344.00px">80.350,90</span>
<span class="t" style="right:209.20px;top:344.00px">-873.674,87</span>
<span class="t b" style="right:67.20px;top:344.00px;font-size:12.00px">-793.323,97</span>
<div class="" style="position:absolute;left:77.00px;top:359.00px;width:1135.80px;height:16.00px;background:#ccfbcc;border:1px solid #a9cfa9;box-sizing:border-box"></div>
<span class="t b" style="left:81.40px;top:359.00px;font-size:12.00px">Kostenart</span>
<span class="t b" style="letter-spacing:-0.123px;left:158.50px;top:359.00px;font-size:12.00px">Kostenartbezeichnung</span>
<span class="t b" style="letter-spacing:-0.123px;left:387.60px;top:359.00px;font-size:12.00px">Kostenstelle</span>
<span class="t b" style="letter-spacing:-0.261px;right:484.66px;top:359.00px;font-size:12.00px">Fixe Kosten</span>
<span class="t b" style="letter-spacing:-0.059px;right:346.26px;top:359.00px;font-size:12.00px">Variable Kosten</span>
<span class="t b" style="letter-spacing:-0.285px;right:210.88px;top:359.00px;font-size:12.00px">Leistung</span>
<span class="t b" style="letter-spacing:-0.071px;right:65.07px;top:359.00px;font-size:12.00px">Summe Kostenart</span>
<span class="t" style="right:1122.70px;top:374.50px">3400</span>
<span class="t" style="left:158.50px;top:374.50px">Wareneingang 19% VSt</span>
<span class="t" style="right:817.50px;top:374.50px">100</span>
<span class="t" style="right:484.40px;top:374.50px">26.276,00</span>
<span class="t b" style="right:65.00px;top:374.50px;font-size:12.00px">26.276,00</span>
<div class="" style="position:absolute;left:119.00px;top:389.00px;width:1093.60px;height:16.60px;background:#ececee;border:1px solid #c2c2c4;box-sizing:border-box"></div>
<div class="" style="position:absolute;left:119.00px;top:405.50px;width:1090.50px;height:127.00px;background:#fffcbb"></div>
<span class="t b" style="left:121.60px;top:390.00px;font-size:12.00px">Kostenart</span>
<span class="t b" style="left:210.80px;top:390.00px;font-size:12.00px">Buchdatum</span>
<span class="t b" style="letter-spacing:-0.217px;left:292.00px;top:390.00px;font-size:12.00px">Belegnummer1</span>
<span class="t b" style="letter-spacing:-0.230px;left:500.70px;top:390.00px;font-size:12.00px">Belegdatum</span>
<span class="t b" style="letter-spacing:-0.322px;right:598.72px;top:390.00px;font-size:12.00px">Gegenkonto</span>
<span class="t b" style="letter-spacing:-0.191px;left:685.10px;top:390.00px;font-size:12.00px">Gegenkontobezeichnung</span>
<span class="t b" style="letter-spacing:-0.420px;right:309.42px;top:390.00px;font-size:12.00px">GegKtTyp</span>
<span class="t b" style="letter-spacing:-0.118px;right:236.42px;top:390.00px;font-size:12.00px">Jrn - Zeile</span>
<span class="t b" style="letter-spacing:-0.182px;right:95.78px;top:390.00px;font-size:12.00px">Betrag</span>
<span class="t b" style="letter-spacing:-1.182px;left:1190.50px;top:390.00px;font-size:12.00px">FVL</span>
<span class="t" style="right:1076.30px;top:406.00px">3400</span>
<span class="t" style="left:210.80px;top:406.00px">03.05.2017</span>
<span class="t" style="left:292.00px;top:406.00px">182435</span>
<span class="t" style="left:502.00px;top:406.00px">24.01.2017</span>
<span class="t" style="right:598.40px;top:406.00px">70014</span>
<span class="t" style="left:685.10px;top:406.00px">Restaurant Bavaria</span>
<span class="t" style="right:309.00px;top:406.00px">Kred</span>
<span class="t" style="right:236.30px;top:406.00px">138</span>
<span class="t" style="right:95.60px;top:406.00px">264,00</span>
<span class="t" style="left:1203.80px;top:406.00px;width:5.7px;overflow:hidden">F</span>
<span class="t" style="letter-spacing:0.309px;left:121.60px;top:421.10px;font-size:9.80px;color:#1c1c84">Catering</span>
<span class="t" style="right:1076.30px;top:437.70px">3400</span>
<span class="t" style="left:210.80px;top:437.70px">24.01.2017</span>
<span class="t" style="left:292.00px;top:437.70px">142415</span>
<span class="t" style="left:502.00px;top:437.70px">24.01.2017</span>
<span class="t" style="right:598.40px;top:437.70px">70017</span>
<span class="t" style="left:685.10px;top:437.70px">Hardware-Haus Kayser</span>
<span class="t" style="right:309.00px;top:437.70px">Kred</span>
<span class="t" style="right:236.30px;top:437.70px">498</span>
<span class="t" style="right:95.60px;top:437.70px">285,00</span>
<span class="t" style="left:1203.80px;top:437.70px;width:5.7px;overflow:hidden">F</span>
<span class="t" style="letter-spacing:0.365px;left:121.60px;top:451.80px;font-size:9.80px;color:#1c1c84">Eingangsrechnung</span>
<span class="t" style="right:1076.30px;top:469.50px">3400</span>
<span class="t" style="left:210.80px;top:469.50px">03.05.2017</span>
<span class="t" style="left:292.00px;top:469.50px">742435</span>
<span class="t" style="left:502.00px;top:469.50px">24.01.2017</span>
<span class="t" style="right:598.40px;top:469.50px">70128</span>
<span class="t" style="left:685.10px;top:469.50px">Hamburger Sparkasse</span>
<span class="t" style="right:309.00px;top:469.50px">Kred</span>
<span class="t" style="right:236.30px;top:469.50px">502</span>
<span class="t" style="right:95.60px;top:469.50px">15.843,00</span>
<span class="t" style="left:1203.80px;top:469.50px;width:5.7px;overflow:hidden">F</span>
<span class="t" style="letter-spacing:0.365px;left:121.60px;top:483.50px;font-size:9.80px;color:#1c1c84">Eingangsrechnung</span>
<span class="t" style="right:1076.30px;top:501.00px">3400</span>
<span class="t" style="left:210.80px;top:501.00px">24.01.2017</span>
<span class="t" style="left:292.00px;top:501.00px">512415</span>
<span class="t" style="left:502.00px;top:501.00px">24.01.2017</span>
<span class="t" style="right:598.40px;top:501.00px">70012</span>
<span class="t" style="left:685.10px;top:501.00px">Verbundenes Unternehmen</span>
<span class="t" style="right:309.00px;top:501.00px">Kred</span>
<span class="t" style="right:236.30px;top:501.00px">526</span>
<span class="t" style="right:95.60px;top:501.00px">9.884,00</span>
<span class="t" style="left:1203.80px;top:501.00px;width:5.7px;overflow:hidden">F</span>
<span class="t" style="letter-spacing:0.365px;left:121.60px;top:515.40px;font-size:9.80px;color:#1c1c84">Eingangsrechnung</span>
<div class="" style="position:absolute;left:119.50px;top:533.00px;width:1093.30px;height:1.00px;background:#b0b0b0"></div>
<span class="t" style="right:1122.70px;top:537.00px">4124</span>
<span class="t" style="left:158.50px;top:537.00px;width:201px;overflow:hidden;white-space:nowrap">Geschäftsführergehälter GmbH-Gese</span>
<span class="t" style="right:817.50px;top:537.00px">100</span>
<span class="t" style="right:484.40px;top:537.00px">44.690,00</span>
<span class="t b" style="right:65.00px;top:537.00px;font-size:12.00px">44.690,00</span>
<span class="t" style="right:1122.70px;top:553.20px">4130</span>
<span class="t" style="left:158.50px;top:553.20px">Gesetzl.soz.Aufwendungen</span>
<span class="t" style="right:817.50px;top:553.20px">100</span>
<span class="t" style="right:484.40px;top:553.20px">9.384,90</span>
<span class="t b" style="right:65.00px;top:553.20px;font-size:12.00px">9.384,90</span>
<span class="t" style="right:1122.70px;top:569.50px">8300</span>
<span class="t" style="left:158.50px;top:569.50px">Erlöse 7% USt</span>
<span class="t" style="right:817.50px;top:569.50px">100</span>
<span class="t" style="right:210.40px;top:569.50px">-47.497,94</span>
<span class="t b" style="right:65.00px;top:569.50px;font-size:12.00px">-47.497,94</span>
<span class="t" style="right:1122.70px;top:585.50px">8400</span>
<span class="t" style="left:158.50px;top:585.50px">Erlöse 19 % USt</span>
<span class="t" style="right:817.50px;top:585.50px">100</span>
<span class="t" style="right:210.40px;top:585.50px">-826.176,93</span>
<span class="t b" style="right:65.00px;top:585.50px;font-size:12.00px">-826.176,93</span>
<div class="" style="position:absolute;left:77.50px;top:602.70px;width:1135.30px;height:1.00px;background:#b0b0b0"></div>
<span class="t b" style="left:79.70px;top:604.00px;font-size:12.00px">Summe Kostenarten</span>
<span class="t b" style="right:484.40px;top:604.00px;font-size:12.00px">80.350,90</span>
<span class="t b" style="right:346.00px;top:604.00px;font-size:12.00px">0,00</span>
<span class="t b" style="right:210.40px;top:604.00px;font-size:12.00px">-873.674,87</span>
<span class="t b" style="right:65.00px;top:604.00px;font-size:12.00px">-793.323,97</span>
<div class="" style="position:absolute;left:77.50px;top:619.30px;width:1135.30px;height:1.00px;background:#b0b0b0"></div>
<span class="t" style="right:1137.30px;top:624.00px">200</span>
<span class="t" style="left:171.00px;top:624.00px">Quickborn - Filiale</span>
<span class="t" style="right:484.50px;top:624.00px">57.477,62</span>
<span class="t" style="right:209.20px;top:624.00px">-1.451.948,62</span>
<span class="t b" style="right:67.20px;top:624.00px;font-size:12.00px">-1.394.471,00</span>
<span class="t" style="right:1137.30px;top:640.00px">300</span>
<span class="t" style="left:171.00px;top:640.00px">Bremen &nbsp; &nbsp;- Filiale</span>
<span class="t" style="right:484.50px;top:640.00px">49.267,31</span>
<span class="t" style="right:209.20px;top:640.00px">-1.342.794,11</span>
<span class="t b" style="right:67.20px;top:640.00px;font-size:12.00px">-1.293.526,80</span>
<span class="t" style="right:1137.30px;top:657.00px">400</span>
<span class="t" style="left:171.00px;top:657.00px">Rostock &nbsp; - Filiale</span>
<span class="t" style="right:484.50px;top:657.00px">84.241,19</span>
<span class="t" style="right:209.20px;top:657.00px">-1.315.376,80</span>
<span class="t b" style="right:67.20px;top:657.00px;font-size:12.00px">-1.231.135,61</span>
<span class="t" style="right:1137.30px;top:673.00px">500</span>
<span class="t" style="left:171.00px;top:673.00px">Lübeck &nbsp; &nbsp;- Filiale</span>
<span class="t" style="right:484.50px;top:673.00px">53.508,62</span>
<span class="t" style="right:209.20px;top:673.00px">-1.256.503,82</span>
<span class="t b" style="right:67.20px;top:673.00px;font-size:12.00px">-1.202.995,20</span>
<span class="t" style="right:1137.30px;top:689.00px">1001</span>
<span class="t" style="left:171.00px;top:689.00px">PI-DD 460</span>
<span class="t" style="right:484.50px;top:689.00px">615,00</span>
<span class="t b" style="right:67.20px;top:689.00px;font-size:12.00px">615,00</span>
<span class="t" style="right:1137.30px;top:706.00px">1002</span>
<span class="t" style="left:171.00px;top:706.00px">PI-FF 165</span>
<span class="t" style="right:484.50px;top:706.00px">933,71</span>
<span class="t b" style="right:67.20px;top:706.00px;font-size:12.00px">933,71</span>
<span class="t" style="right:1137.30px;top:722.00px">1006</span>
<span class="t" style="left:171.00px;top:722.00px">PI-FF 890</span>
<span class="t" style="right:484.50px;top:722.00px">2.222,22</span>
<span class="t b" style="right:67.20px;top:722.00px;font-size:12.00px">2.222,22</span>
<div class="" style="position:absolute;left:59.00px;top:739.00px;width:1154.00px;height:1.00px;background:#000"></div>
<span class="t b" style="letter-spacing:-0.124px;left:61.40px;top:740.80px;font-size:12.00px">Endsummen &nbsp;Kostenstellen</span>
<span class="t b" style="right:484.40px;top:740.80px;font-size:12.00px">497.993,26</span>
<span class="t b" style="right:346.00px;top:740.80px;font-size:12.00px">0,00</span>
<span class="t b" style="right:209.20px;top:740.80px;font-size:12.00px">-7.672.427,26</span>
<span class="t b" style="right:67.20px;top:740.80px;font-size:12.00px">-7.174.434,00</span>
<div class="" style="position:absolute;left:59.00px;top:757.00px;width:1154.00px;height:1.00px;background:#000"></div>
</div>
</body>
</html>
